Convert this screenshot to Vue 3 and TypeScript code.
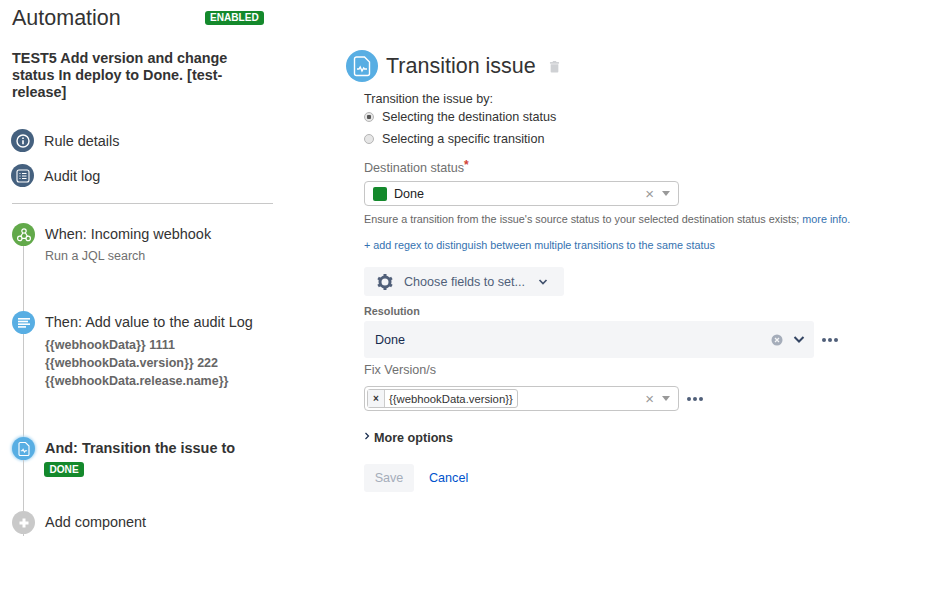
<script setup lang="ts">
const codeLines: string[] = [
  '{{webhookData}} 1111',
  '{{webhookData.version}} 222',
  '{{webhookData.release.name}}',
]
const versionTag: string = '{{webhookData.version}}'
</script>

<template>
  <div class="page">
    <aside class="side">
      <div class="head">
        <h1 class="brand">Automation</h1>
        <span class="lozenge enabled">ENABLED</span>
      </div>
      <h2 class="rule">TEST5 Add version and change status In deploy to Done. [test-release]</h2>
      <nav class="nav">
        <div class="nav-item">
          <span class="nav-ic">
            <svg width="16" height="16" viewBox="0 0 16 16" fill="none" stroke="#fff"><circle cx="8" cy="8" r="6" stroke-width="1.4"/><path d="M8 7.2v4M8 4.6v1.4" stroke-width="1.6"/></svg>
          </span>
          <span>Rule details</span>
        </div>
        <div class="nav-item">
          <span class="nav-ic">
            <svg width="16" height="16" viewBox="0 0 16 16" fill="none" stroke="#fff" stroke-width="1.1"><rect x="2" y="2" width="12" height="12" rx="2"/><path d="M4.5 5.5h1M7 5.5h4.5M4.5 8h1M7 8h4.5M4.5 10.5h1M7 10.5h4.5"/></svg>
          </span>
          <span>Audit log</span>
        </div>
      </nav>
      <div class="divider"></div>
      <div class="timeline">
        <div class="step s1">
          <div class="rail">
            <span class="dot green">
              <svg width="16" height="16" viewBox="0 0 16 16" fill="none" stroke="#fff" stroke-width="1.2"><circle cx="8" cy="4" r="2.2"/><circle cx="3.8" cy="11.4" r="2.2"/><circle cx="12.2" cy="11.4" r="2.2"/><path d="M6.800 6 4.600 9.600M9.300 5.800l2.300 3.800M5.800 11.400h4.400"/></svg>
            </span>
            <span class="line"></span>
          </div>
          <div class="body">
            <div class="step-title">When: Incoming webhook</div>
            <div class="step-sub">Run a JQL search</div>
          </div>
        </div>
        <div class="step s2">
          <div class="rail">
            <span class="dot blue">
              <svg width="14" height="14" viewBox="0 0 14 14" fill="#fff"><rect x="1" y="2" width="12" height="1.6"/><rect x="1" y="4.7" width="10" height="1.6"/><rect x="1" y="7.4" width="12" height="1.6"/><rect x="1" y="10.1" width="8" height="1.6"/></svg>
            </span>
            <span class="line"></span>
          </div>
          <div class="body">
            <div class="step-title">Then: Add value to the audit Log</div>
            <div v-for="c in codeLines" :key="c" class="step-code">{{ c }}</div>
          </div>
        </div>
        <div class="step s3">
          <div class="rail">
            <span class="dot blue glow">
              <svg width="14" height="16" viewBox="0 0 14 16" fill="none" stroke="#fff" stroke-width="1.1"><path d="M3.300 1.500h5.200L12 5v8.200a1.300 1.300 0 0 1-1.300 1.300H3.300A1.300 1.300 0 0 1 2 13.200V2.800a1.300 1.300 0 0 1 1.300-1.300z"/><path d="M3.800 9.800h1.400l.9-1.400 1.300 2.600 1-1.200h1.700"/></svg>
            </span>
            <span class="line"></span>
          </div>
          <div class="body">
            <div class="step-title strong">And: Transition the issue to</div>
            <span class="lozenge done">DONE</span>
          </div>
        </div>
        <div class="step s4">
          <div class="rail">
            <span class="dot grey">
              <svg width="12" height="12" viewBox="0 0 12 12" fill="none" stroke="#fff" stroke-width="3"><path d="M6 1.500v9M1.500 6h9"/></svg>
            </span>
            <span class="line tail"></span>
          </div>
          <div class="body">
            <div class="step-title">Add component</div>
          </div>
        </div>
      </div>
    </aside>

    <main class="main">
      <header class="main-head">
        <span class="big-ic">
          <svg width="20" height="22" viewBox="0 0 20 22" fill="none" stroke="#fff" stroke-width="1.4"><path d="M4.500 2h8L17.500 7v11.500a2 2 0 0 1-2 2h-11a2 2 0 0 1-2-2V4a2 2 0 0 1 2-2z"/><path d="M5 14h2l1.200-2 1.800 4 1.700-3 .8 1H15"/></svg>
        </span>
        <h1 class="main-title">Transition issue</h1>
        <svg class="trash" width="11" height="13" viewBox="0 0 12 13" fill="#cfd1d4"><rect x="4" y="0.5" width="4" height="1.5" rx=".5"/><rect x="1" y="1.6" width="10" height="1.8" rx=".5"/><path d="M1.800 4h8.400v8a1 1 0 0 1-1 1H2.800a1 1 0 0 1-1-1z"/></svg>
      </header>

      <div class="form">
        <div class="by">Transition the issue by:</div>
        <label class="radio r1"><span class="rb on"></span>Selecting the destination status</label>
        <label class="radio r2"><span class="rb"></span>Selecting a specific transition</label>

        <div class="lab dest">Destination status<span class="req">*</span></div>
        <div class="select status">
          <span class="sq"></span>
          <span class="val">Done</span>
          <span class="x">×</span>
          <span class="caret"></span>
        </div>
        <p class="hint">Ensure a transition from the issue's source status to your selected destination status exists; <a class="hl">more info.</a></p>
        <a class="regex">+ add regex to distinguish between multiple transitions to the same status</a>

        <div class="choose">
          <svg width="18" height="18" viewBox="0 0 18 18" fill="none" stroke="#505f79"><circle cx="9" cy="9" r="5" stroke-width="3"/><path d="M9 1v3M9 14v3M2.100 5l2.600 1.500M13.300 11.500l2.600 1.500M2.100 13l2.600-1.500M13.300 6.500l2.600-1.500" stroke-width="3"/></svg>
          <span class="choose-t">Choose fields to set...</span>
          <svg width="10" height="8" viewBox="0 0 10 8" fill="none" stroke="#42526e" stroke-width="1.700"><path d="M1.500 2 5 5.500 8.500 2"/></svg>
        </div>

        <div class="lab-b">Resolution</div>
        <div class="row res-row">
          <div class="res">
            <span class="res-val">Done</span>
            <svg class="clear" width="12" height="12" viewBox="0 0 12 12"><circle cx="6" cy="6" r="5.500" fill="#a5adba"/><path d="M4 4l4 4M8 4l-4 4" stroke="#f4f5f7" stroke-width="1.300"/></svg>
            <svg class="chev" width="12" height="9" viewBox="0 0 12 9" fill="none" stroke="#344563" stroke-width="2"><path d="M1.500 2 6 6.500 10.500 2"/></svg>
          </div>
          <span class="dots d1"><i></i><i></i><i></i></span>
        </div>

        <div class="lab fix">Fix Version/s</div>
        <div class="row multi-row">
          <div class="select multi">
            <span class="tag"><span class="tag-x">×</span><span class="tag-t">{{ versionTag }}</span></span>
            <span class="x">×</span>
            <span class="caret"></span>
          </div>
          <span class="dots d2"><i></i><i></i><i></i></span>
        </div>

        <div class="more">
          <svg width="6" height="8" viewBox="0 0 6 8" fill="none" stroke="#172b4d" stroke-width="1.200"><path d="M1.500 1 4.500 4 1.500 7"/></svg>
          <span>More options</span>
        </div>

        <div class="actions">
          <button class="save" disabled>Save</button>
          <a class="cancel">Cancel</a>
        </div>
      </div>
    </main>
  </div>
</template>

<style>
html, body { margin: 0; background: #fff; }
</style>

<style scoped>
.page {
  width: 930px;
  height: 596px;
  overflow: hidden;
  display: flex;
  font-family: "Liberation Sans", Arial, sans-serif;
  color: #333;
  font-size: 14px;
}
.side { width: 261px; margin-left: 12px; flex: none; }
.head { display: flex; align-items: center; height: 36px; }
h1, h2, p { margin: 0; font-weight: 400; }
.brand { font-size: 21.5px; line-height: 36px; width: 193px; }
.lozenge {
  display: inline-block;
  background: #14892c;
  color: #fff;
  font-size: 10.080px;
  font-weight: 700;
  border-radius: 3px;
}
.enabled { padding: 0 5px; line-height: 14px; }
.rule { font-size: 14.400px; font-weight: 700; line-height: 17px; margin-top: 14px; width: 240px; }
.nav { margin-top: 28px; display: flex; flex-direction: column; gap: 12px; }
.nav-item { display: flex; align-items: center; gap: 10px; height: 23px; font-size: 14.440px; }
.nav-ic {
  width: 23px; height: 23px; margin-left: -1px; border-radius: 50%;
  background: #45617f; display: flex; align-items: center; justify-content: center;
}
.divider { height: 1px; background: #c8c8c8; margin-top: 16px; }
.timeline { margin-top: 19px; }
.step { display: flex; gap: 10px; }
.s1 { height: 88px; }
.s2 { height: 126px; }
.s3 { height: 74px; }
.rail { width: 23px; display: flex; flex-direction: column; align-items: center; flex: none; }
.dot {
  width: 23px; height: 23px; border-radius: 50%; flex: none;
  display: flex; align-items: center; justify-content: center;
}
.green { background: #62a94a; }
.blue { background: #58aee3; }
.grey { background: #c9c9c9; }
.glow { box-shadow: 0 0 3px 1px #a9d6f2; }
.line { flex: 1; width: 1px; background: #c8c8c8; }
.tail { flex: none; height: 2px; }
.body { padding-top: 3px; }
.step-title { font-size: 14.440px; line-height: 17px; }
.strong { font-weight: 700; }
.step-sub { font-size: 12.500px; color: #707070; margin-top: 5px; line-height: 16px; }
.step-code { font-size: 12.500px; font-weight: 700; color: #666; line-height: 18px; }
.step-title + .step-code { margin-top: 5px; }
.done { margin-top: 5px; margin-left: -1px; padding: 0 5.500px; line-height: 15px; }

.main { margin-left: 73px; flex: none; width: 520px; }
.main-head { display: flex; align-items: center; margin-top: 50px; height: 32px; }
.big-ic {
  width: 32px; height: 32px; border-radius: 50%; background: #58aee3;
  display: flex; align-items: center; justify-content: center; flex: none;
}
.main-title { font-size: 21.500px; margin-left: 8px; line-height: 32px; }
.trash { margin-left: 13px; }
.form { margin-left: 18px; width: 500px; font-size: 12.600px; }
.by { margin-top: 9px; line-height: 16px; }
.radio { display: flex; align-items: center; line-height: 16px; }
.r1 { margin-top: 2px; }
.r2 { margin-top: 6px; }
.rb {
  width: 10px; height: 10px; border-radius: 50%; background: #e6e6e6; border: 1px solid #b5b5b5;
  box-sizing: border-box; margin-right: 8px; flex: none;
}
.rb.on { background: radial-gradient(circle, #555 0 2px, #e6e6e6 2.500px); }
.lab { color: #707070; line-height: 16px; }
.dest { margin-top: 13px; }
.req { color: #d04437; font-size: 12px; font-weight: 700; vertical-align: 3px; line-height: 0; }
.select {
  box-sizing: border-box;
  border: 1px solid #c6c6c6;
  border-radius: 4px;
  width: 315px;
  height: 25px;
  display: flex;
  align-items: center;
  background: #fff;
}
.status { margin-top: 5px; padding-left: 8px; }
.sq { width: 14px; height: 14px; border-radius: 2px; background: #14892c; margin-right: 7px; }
.val { flex: 1; color: #222; }
.x { color: #999; font-size: 15px; margin-right: 8px; margin-left: auto; line-height: 1; }
.caret { width: 0; height: 0; border: 4.500px solid transparent; border-top: 5px solid #999; border-bottom: 0; margin-right: 8px; }
.hint { font-size: 10.800px; color: #666; margin-top: 7px; line-height: 13px; white-space: nowrap; }
.hl, .regex { color: #3572b0; }
.regex { display: block; font-size: 10.800px; margin-top: 13px; line-height: 13px; }
.choose {
  margin-top: 15px; width: 200px; height: 29px; background: #f4f5f7; border-radius: 3px;
  display: flex; align-items: center; box-sizing: border-box; padding-left: 12px;
  color: #505f79;
}
.choose-t { margin-left: 10px; margin-right: 13px; }
.lab-b { font-size: 10.800px; font-weight: 700; color: #6b6b6b; margin-top: 9px; line-height: 13px; }
.row { display: flex; align-items: center; }
.res-row { margin-top: 3px; }
.res {
  width: 450px; height: 37px; background: #f4f5f7; border-radius: 3px;
  display: flex; align-items: center; box-sizing: border-box; padding: 0 9px 0 11px;
  color: #172b4d;
}
.res-val { flex: 1; }
.chev { margin-left: 10px; }
.dots { display: inline-flex; gap: 2px; }
.dots i { width: 4px; height: 4px; border-radius: 50%; background: #505f79; }
.d1 { margin-left: 8px; }
.d2 { margin-left: 8px; }
.fix { margin-top: 4px; }
.multi-row { margin-top: 8px; }
.multi { padding-left: 2px; }
.tag {
  display: inline-flex; align-items: center; height: 19px; box-sizing: border-box;
  border: 1px solid #c6c6c6; border-radius: 3px; font-size: 11.300px; color: #333;
}
.tag-x { width: 16px; text-align: center; border-right: 1px solid #ccc; line-height: 17px; background: #f4f5f7; font-weight: 700; font-size: 10px; }
.tag-t { padding: 0 4px 0 4px; }
.more { margin-top: 19px; display: flex; align-items: center; gap: 4px; font-weight: 700; line-height: 16px; }
.more svg { margin-top: -5px; }
.actions { margin-top: 18px; display: flex; align-items: center; }
.save {
  width: 50px; height: 28px; border: 0; background: #f4f5f7; color: #a5adba; border-radius: 3px;
  font: inherit; padding: 0;
}
.cancel { color: #0052cc; margin-left: 15px; }
</style>
